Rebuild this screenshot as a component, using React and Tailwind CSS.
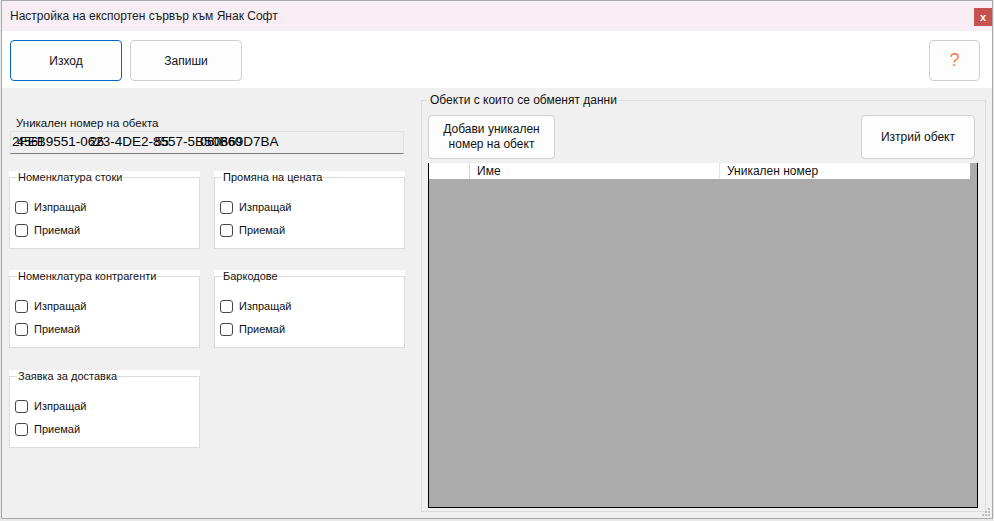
function CheckRow({ label }) {
  return (
    <label className="flex items-center gap-[6px] h-[13px]">
      <span className="w-[13px] h-[13px] rounded-[3px] border border-[#474747] bg-white" />
      <span>{label}</span>
    </label>
  )
}

function Group({ title }) {
  return (
    <div className="relative w-[191px] h-[78px] bg-white pt-[6px]">
      <div className="h-full border border-[#dcdcdc] pl-[5px] pt-[23px] flex flex-col gap-[10px]">
        <CheckRow label="Изпращай" />
        <CheckRow label="Приемай" />
      </div>
      <span className="absolute left-[8px] top-0 bg-white px-[1px] leading-[13px]">{title}</span>
    </div>
  )
}

export default function App() {
  return (
    <div className="w-[994px] h-[521px] bg-[#e9e9e9] pl-px font-['Liberation_Sans',Arial,sans-serif] text-[11px] text-[#111]">
      <div className="relative w-[992px] h-[519px] border border-[#a8a8a8] flex flex-col bg-[#f0f0f0]">
        {/* title bar */}
        <div className="h-[30px] bg-[#f6eef4] flex items-start justify-between">
          <span className="ml-[8px] mt-[8px] text-[12px] leading-[14px] text-[#1a1a1a]">Настройка на експортен сървър към Янак Софт</span>
          <button className="mt-[7px] w-[18px] h-[18px] bg-[#c75050] text-white text-[11px] font-bold leading-none flex items-center justify-center">x</button>
        </div>

        {/* toolbar */}
        <div className="h-[57px] bg-white flex items-start pt-[9px] pl-[8px] pr-[12px] gap-[8px] text-[12px]">
          <button className="w-[112px] h-[41px] rounded-[4px] border border-[#0067c0] bg-[#fdfdfd]">Изход</button>
          <button className="w-[112px] h-[41px] rounded-[4px] border border-[#d0d0d0] bg-[#fdfdfd]">Запиши</button>
          <button className="ml-auto w-[51px] h-[41px] rounded-[4px] border border-[#d0d0d0] bg-[#fdfdfd] text-[#f47c4a] text-[18px]">?</button>
        </div>

        {/* main */}
        <div className="flex-1 flex">
          <div className="w-[419px] pl-[7px] pt-[28px]">
            <div className="ml-[7px] text-[11.5px] leading-[15px]">Уникален номер на обекта</div>
            <div className="relative ml-px w-[394px] h-[23px] bg-[#f0f0f0] border border-[#e2e2e2] border-b-[#7a7a7a] pl-px flex items-center text-[13.5px] text-black">
              <span>2FEB9551-0623-4DE2-8557-5B50B69D7BA</span>
              <span className="absolute left-[6px] top-[1px] text-[12.5px]">4561</span>
              <span className="absolute left-[79px] top-[1px] text-[12.5px]">26</span>
              <span className="absolute left-[144px] top-[1px] text-[12.5px]">55</span>
              <span className="absolute left-[189px] top-[1px] text-[12.5px]">060660</span>
            </div>
            <div className="mt-[17px] flex flex-col">
              <div className="flex gap-[14px]">
                <Group title="Номенклатура стоки" />
                <Group title="Промяна на цената" />
              </div>
              <div className="mt-[21px] flex gap-[14px]">
                <Group title="Номенклатура контрагенти" />
                <Group title="Баркодове" />
              </div>
              <div className="mt-[22px] flex">
                <Group title="Заявка за доставка" />
              </div>
            </div>
          </div>

          <div className="relative mt-[12px] w-[565px] h-[412px] border border-[#dcdcdc] pt-[14px] pl-[6px] text-[12px]">
            <span className="absolute left-[7px] -top-[8px] bg-[#f0f0f0] px-px leading-[14px]">Обекти с които се обменят данни</span>
            <div className="w-[550px] flex justify-between">
              <button className="w-[127px] h-[44px] rounded-[4px] border border-[#d0d0d0] bg-[#fdfdfd] leading-[15px]">Добави уникален<br />номер на обект</button>
              <button className="mr-[3px] w-[114px] h-[44px] rounded-[4px] border border-[#d0d0d0] bg-[#fdfdfd]">Изтрий обект</button>
            </div>
            <div className="mt-[4px] w-[550px] h-[345px] bg-[#ababab] border border-t-0 border-black">
              <div className="w-[541px] h-[16px] bg-white flex leading-[16px]">
                <div className="w-[41px] border-r border-[#d8d8d8]" />
                <div className="w-[250px] pl-[7px] border-r border-[#e4e4e4]">Име</div>
                <div className="flex-1 pl-[7px]">Уникален номер</div>
              </div>
            </div>
          </div>
        </div>

        <svg className="absolute right-[2px] bottom-[2px]" width="8" height="8" viewBox="0 0 8 8">
          <rect x="6" y="0" width="2" height="2" fill="#bdbdbd" />
          <rect x="3" y="3" width="2" height="2" fill="#bdbdbd" />
          <rect x="6" y="3" width="2" height="2" fill="#bdbdbd" />
          <rect x="0" y="6" width="2" height="2" fill="#bdbdbd" />
          <rect x="3" y="6" width="2" height="2" fill="#bdbdbd" />
          <rect x="6" y="6" width="2" height="2" fill="#bdbdbd" />
        </svg>
      </div>
    </div>
  )
}
